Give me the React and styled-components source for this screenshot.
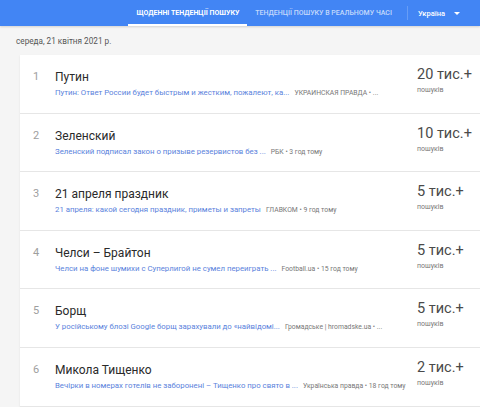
import React from "react";
import styled, { createGlobalStyle } from "styled-components";

const GlobalStyle = createGlobalStyle`
  html, body {
    margin: 0;
    padding: 0;
    background: #f5f5f5;
    font-family: Roboto, "Liberation Sans", Arial, sans-serif;
  }
`;

const trends = [
  {
    title: "Путин",
    link: "Путин: Ответ России будет быстрым и жестким, пожалеют, ка...",
    source: "УКРАИНСКАЯ ПРАВДА • ...",
    count: "20 тис.+",
  },
  {
    title: "Зеленский",
    link: "Зеленский подписал закон о призыве резервистов без ...",
    source: "РБК • 3 год тому",
    count: "10 тис.+",
  },
  {
    title: "21 апреля праздник",
    link: "21 апреля: какой сегодня праздник, приметы и запреты",
    source: "ГЛАВКОМ • 9 год тому",
    count: "5 тис.+",
  },
  {
    title: "Челси – Брайтон",
    link: "Челси на фоне шумихи с Суперлигой не сумел переиграть ...",
    source: "Football.ua • 15 год тому",
    count: "5 тис.+",
  },
  {
    title: "Борщ",
    link: "У російському блозі Google борщ зарахували до «найвідомі...",
    source: "Громадське | hromadske.ua • ...",
    count: "5 тис.+",
  },
  {
    title: "Микола Тищенко",
    link: "Вечірки в номерах готелів не заборонені – Тищенко про свято в ...",
    source: "Українська правда • 18 год тому",
    count: "2 тис.+",
  },
];

function App() {
  return (
    <Page>
      <GlobalStyle />
      <Header>
        <Tab active>Щоденні тенденції пошуку</Tab>
        <Tab>Тенденції пошуку в реальному часі</Tab>
        <Divider />
        <Country>
          Україна
          <Caret />
        </Country>
      </Header>

      <DateLine>середа, 21 квітня 2021 р.</DateLine>

      <Card>
        {trends.map((t, i) => (
          <Row key={t.title}>
            <Index>{i + 1}</Index>
            <Content>
              <Title>{t.title}</Title>
              <Meta>
                <Link>{t.link}</Link>
                <Source>{t.source}</Source>
              </Meta>
            </Content>
            <Metric>
              <Count>{t.count}</Count>
              <Label>пошуків</Label>
            </Metric>
          </Row>
        ))}
      </Card>
    </Page>
  );
}

export default App;

const Page = styled.div`
  width: 480px;
  height: 407px;
  overflow: hidden;
  background: #f5f5f5;
`;

const Header = styled.div`
  height: 26px;
  background: #4285f4;
  display: flex;
  align-items: stretch;
  justify-content: flex-end;
  padding-right: 20px;
  box-shadow: 0 1px 2px rgba(0, 0, 0, 0.15);
`;

const Tab = styled.div`
  display: flex;
  align-items: center;
  padding: 2px 8px 0;
  font-size: 7px;
  font-weight: ${(p) => (p.active ? 700 : 500)};
  text-transform: uppercase;
  color: ${(p) => (p.active ? "#fff" : "rgba(255,255,255,0.7)")};
  border-bottom: 2px solid ${(p) => (p.active ? "#fff" : "transparent")};
  box-sizing: border-box;
  white-space: nowrap;
`;

const Divider = styled.div`
  width: 1px;
  height: 14px;
  align-self: center;
  background: rgba(255, 255, 255, 0.2);
  margin: 0 10px 0 7px;
`;

const Country = styled.div`
  display: flex;
  align-items: center;
  gap: 9px;
  font-size: 7.5px;
  font-weight: 500;
  color: #fff;
`;

const Caret = styled.span`
  width: 0;
  height: 0;
  border-left: 3.5px solid transparent;
  border-right: 3.5px solid transparent;
  border-top: 3.5px solid #fff;
`;

const DateLine = styled.div`
  padding: 10px 0 0 16px;
  height: 29px;
  box-sizing: border-box;
  font-size: 8.2px;
  color: #555;
`;

const Card = styled.div`
  margin-left: 20px;
  background: #fff;
  box-shadow: 0 1px 2px rgba(0, 0, 0, 0.08);
`;

const Row = styled.div`
  height: 58.6px;
  box-sizing: border-box;
  display: flex;
  border-bottom: 1px solid #e6e6e6;
  padding-left: 13px;
`;

const Index = styled.div`
  width: 22px;
  padding-top: 15px;
  font-size: 11px;
  line-height: 13px;
  color: #9e9e9e;
`;

const Content = styled.div`
  flex: 1;
  min-width: 0;
  padding-top: 14px;
`;

const Title = styled.div`
  font-size: 12px;
  line-height: 16px;
  color: #2a2a2a;
  white-space: nowrap;
`;

const Meta = styled.div`
  display: flex;
  align-items: baseline;
  gap: 5px;
  margin-top: 3px;
  white-space: nowrap;
`;

const Link = styled.span`
  font-size: 7.8px;
  color: #5a82dc;
`;

const Source = styled.span`
  font-size: 6.8px;
  color: #777;
`;

const Metric = styled.div`
  width: 63px;
  padding-top: 11px;
`;

const Count = styled.div`
  font-size: 14.5px;
  line-height: 18px;
  color: #4a4a4a;
  white-space: nowrap;
`;

const Label = styled.div`
  font-size: 7px;
  color: #777;
  margin-top: 2px;
`;
